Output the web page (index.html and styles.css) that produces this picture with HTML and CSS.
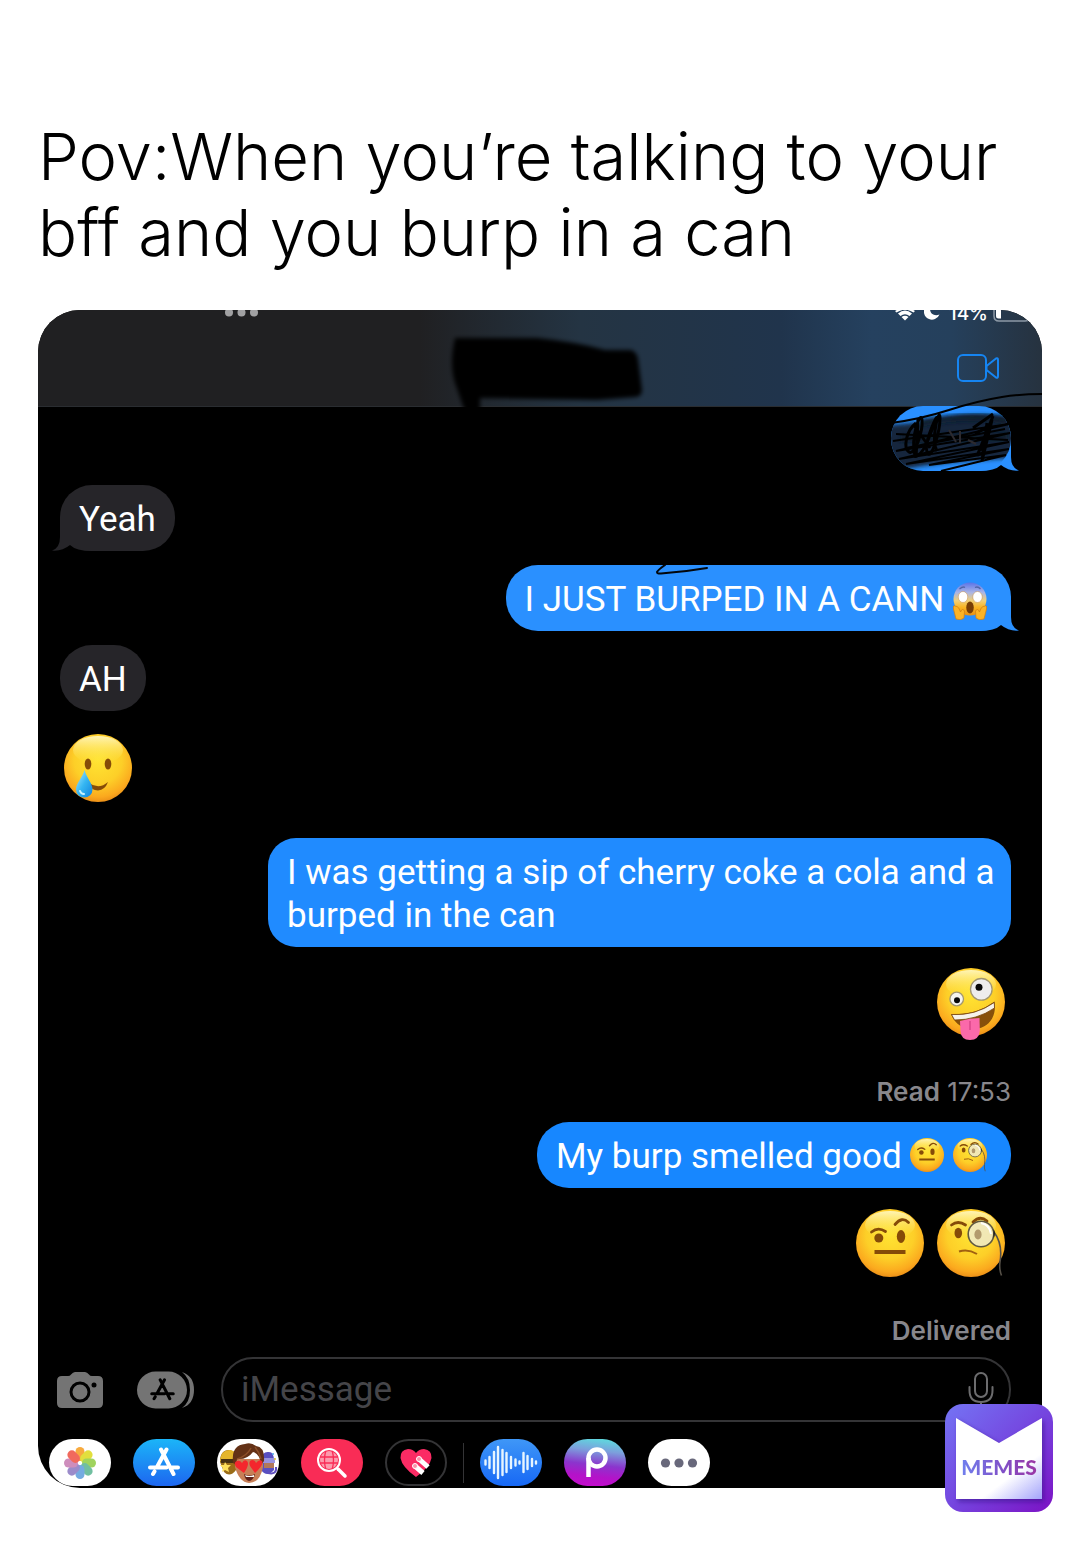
FILE: index.html
```html
<!DOCTYPE html>
<html lang="en">
<head>
<meta charset="utf-8">
<meta name="viewport" content="width=device-width, initial-scale=1">
<title>Burp in a can</title>
<link rel="stylesheet" href="styles.css">
</head>
<body>
<svg class="defs" aria-hidden="true" width="0" height="0">
  <defs>
    <radialGradient id="face" cx="0.5" cy="0.38" r="0.64">
      <stop offset="0" stop-color="#ffe433"/><stop offset="0.55" stop-color="#fdcf28"/><stop offset="0.85" stop-color="#fba91e"/><stop offset="1" stop-color="#e98a16"/>
    </radialGradient>
    <linearGradient id="shine" x1="0" y1="0" x2="0" y2="1">
      <stop offset="0" stop-color="#fffbd0" stop-opacity="0.85"/><stop offset="1" stop-color="#ffe640" stop-opacity="0"/>
    </linearGradient>
    <linearGradient id="fear" x1="0" y1="0" x2="0" y2="1">
      <stop offset="0" stop-color="#5a74e8"/><stop offset="0.3" stop-color="#a9b4e6"/><stop offset="0.55" stop-color="#f0cf78"/><stop offset="0.75" stop-color="#f9b524"/><stop offset="1" stop-color="#e88f12"/>
    </linearGradient>
    <linearGradient id="drop" x1="0" y1="0" x2="1" y2="1">
      <stop offset="0" stop-color="#b5ecff"/><stop offset="0.5" stop-color="#35b6f2"/><stop offset="1" stop-color="#1181dc"/>
    </linearGradient>
    <linearGradient id="store" x1="0" y1="0" x2="0" y2="1">
      <stop offset="0" stop-color="#1bb5f8"/><stop offset="1" stop-color="#1d66f0"/>
    </linearGradient>
    <linearGradient id="audio" x1="0" y1="0" x2="0" y2="1">
      <stop offset="0" stop-color="#3f97f7"/><stop offset="1" stop-color="#1768f5"/>
    </linearGradient>
    <linearGradient id="picsart" x1="0.6" y1="0" x2="0.45" y2="1">
      <stop offset="0" stop-color="#5fd8de"/><stop offset="0.25" stop-color="#7c9fdc"/><stop offset="0.55" stop-color="#8b35cd"/><stop offset="0.8" stop-color="#b413c9"/><stop offset="1" stop-color="#c20dcc"/>
    </linearGradient>
    <linearGradient id="badge" x1="0" y1="0" x2="1" y2="1">
      <stop offset="0" stop-color="#7474f4"/><stop offset="0.5" stop-color="#7546df"/><stop offset="1" stop-color="#7c12c4"/>
    </linearGradient>
    <linearGradient id="paper" x1="0.2" y1="0" x2="1" y2="1">
      <stop offset="0.65" stop-color="#fff"/><stop offset="1" stop-color="#a3a3fb"/>
    </linearGradient>
    <filter id="soft" x="-10%" y="-20%" width="120%" height="140%"><feGaussianBlur stdDeviation="2"/></filter>
    <clipPath id="pill"><rect width="120" height="65" rx="32"/></clipPath>
    <symbol id="base" viewBox="0 0 68 68">
      <circle cx="34" cy="34" r="34" fill="url(#face)"/><ellipse cx="34" cy="16" rx="25" ry="14" fill="url(#shine)"/>
    </symbol>
    <symbol id="tear" viewBox="0 0 68 72">
      <use href="#base" width="68" height="68"/>
      <ellipse cx="24" cy="30" rx="3.3" ry="5.5" fill="#854b08"/><ellipse cx="44" cy="30" rx="3.3" ry="5.5" fill="#854b08"/>
      <path d="M25 49Q35 56 44 48Q41 56 34 56.500Q27 56.500 25 49Z" fill="#854b08"/>
      <path d="M20.500 36C22 43 28.500 49 28.500 55.500A8.200 8 0 0 1 12 55.500C12 49 19 43 20.500 36Z" fill="url(#drop)"/>
      <path d="M16 57q1 3 4 3" fill="none" stroke="#c9f3ff" stroke-width="2" stroke-linecap="round"/>
    </symbol>
    <symbol id="zany" viewBox="0 0 68 72">
      <use href="#base" width="68" height="68"/>
      <circle cx="19.700" cy="31" r="6.800" fill="#f5f4ef" stroke="#a39770" stroke-width="1.300"/><circle cx="20" cy="32.300" r="3" fill="#080808"/>
      <circle cx="44.300" cy="21.300" r="10.800" fill="#eeedec" stroke="#a39770" stroke-width="1.300"/><circle cx="42" cy="19.300" r="3.500" fill="#080808"/>
      <path d="M14 46Q38 48 57.500 33.500C60 48 52 60 38 61C26 62 18 56 14 46Z" fill="#87500a"/>
      <path d="M14.500 46.500Q38 48 57.300 34.500L57.500 40Q40 52 17.500 52Z" fill="#f6f2ea" stroke="#77430a" stroke-width="0.800"/>
      <path d="M23 53Q33 50 42.500 50L42.800 63Q42 72 33 72Q24 72 23.500 63Z" fill="#fb69aa"/>
      <path d="M33 53v9" stroke="#d23f80" stroke-width="1.200"/>
    </symbol>
    <symbol id="raised" viewBox="0 0 68 72">
      <use href="#base" width="68" height="68"/>
      <circle cx="22.800" cy="29" r="4.500" fill="#854b08"/><ellipse cx="45" cy="27.500" rx="4.200" ry="6.500" fill="#854b08"/>
      <path d="M15.500 23Q22 17.500 29.500 22.500M39 15.500Q46 7 52.500 13.500" fill="none" stroke="#854b08" stroke-width="2.800" stroke-linecap="round"/>
      <path d="M18.500 43h31" stroke="#854b08" stroke-width="4"/>
    </symbol>
    <symbol id="monocle" viewBox="0 0 68 72">
      <use href="#base" width="68" height="68"/>
      <ellipse cx="21.300" cy="24" rx="3.800" ry="5.200" fill="#854b08"/>
      <path d="M14.500 16Q21 11 28.500 16M36 13Q43 6 50 12" fill="none" stroke="#854b08" stroke-width="2.800" stroke-linecap="round"/>
      <circle cx="44" cy="25" r="12.800" fill="#eeeacb" fill-opacity="0.850" stroke="#5f5942" stroke-width="1.600"/>
      <ellipse cx="41" cy="25.500" rx="3.600" ry="5" fill="#b29a6d"/>
      <path d="M44 14q9 2 10 11" stroke="#fff" stroke-width="2" fill="none"/>
      <path d="M22 42.500Q31 39.500 40 45" fill="none" stroke="#a06011" stroke-width="2"/>
      <path d="M57 23C63 31 65 41 63 53Q62 60 64.500 66.500" fill="none" stroke="#555047" stroke-width="1.600"/><path d="M56.500 20q3 4 0 9z" fill="#1b1b1b"/>
    </symbol>
    <symbol id="scream" viewBox="0 0 68 76">
      <circle cx="34" cy="34" r="33" fill="url(#fear)"/>
      <path d="M13 14q7-6 11-3M44 11q6-3 11 3" fill="none" stroke="#5366a8" stroke-width="2.500"/>
      <ellipse cx="20" cy="30" rx="9.500" ry="11" fill="#fff" stroke="#c98d42"/><ellipse cx="49" cy="30" rx="9.500" ry="11" fill="#fff" stroke="#c98d42"/>
      <ellipse cx="34" cy="51" rx="7.500" ry="12" fill="#783e06"/>
      <path d="M4 48Q0 45 1 54L6 74Q16 78 22 72L23 58Q19 51 15 60Q12 50 8 49Z" fill="#fbb326" stroke="#d17f12" stroke-width="1.500"/>
      <path d="M64 48Q68 45 67 54L62 74Q52 78 46 72L45 58Q49 51 53 60Q56 50 60 49Z" fill="#fbb326" stroke="#d17f12" stroke-width="1.500"/>
    </symbol>
    <symbol id="tail" viewBox="0 0 40 34">
      <path d="M0 0H32V20Q32 31 40 33.500Q30 34.500 22 28Q16 34 0 34V0Z" fill="currentColor"/>
    </symbol>
    <symbol id="storemark" viewBox="0 0 32 30">
      <g fill="none" stroke="currentColor" stroke-width="4" stroke-linecap="round"><path d="M13 2.500L25.500 27M18.500 2.500L9 20M6.500 24.500L5 27M2 20.500H18.500M24 20.500H30"/></g>
    </symbol>
  </defs>
</svg>

<main class="post">
  <h1 class="caption">Pov:When you’re talking to your bff and you burp in a can</h1>

  <section class="phone" aria-label="Conversation">
    <header class="header">
      <div class="status">
        <svg class="status-dots" width="34" height="12" viewBox="0 0 34 12" fill="#a1a1a3" aria-hidden="true"><circle cx="4" cy="2.500" r="4"/><circle cx="16.500" cy="2.500" r="4"/><circle cx="29" cy="2.500" r="4"/></svg>
        <svg width="20" height="12" viewBox="0 0 20 12" aria-label="Wi-Fi" role="img"><path d="M0 1Q10-5 20 1L18.500 2.500Q10-3 1.500 2.500Z" fill="#fff"/><path d="M3 3.500Q10-2.500 17 3.500L14.500 6Q10 2.500 5.500 6Z" fill="#fff"/><path d="M6.500 7Q10 4.500 13.500 7L10 10.500Z" fill="#fff"/></svg>
        <svg width="16" height="12" viewBox="0 0 16 12" aria-label="Focus" role="img"><path d="M2-4C-4 4 4 12 11 9Q14 8 15.500 4.500C9 7 4 2 7-4Z" fill="#fff"/></svg>
        <span class="battery-text">14%</span>
        <svg class="battery" width="38" height="12" viewBox="0 0 38 12" aria-label="Battery" role="img"><path d="M1-4V6Q1 11 6 11H32Q37 11 37 6V-4" fill="none" stroke="#8d99a6" stroke-width="1.500"/><path d="M3-4V6Q3 8.500 5.500 8.500H8V-4Z" fill="#fff"/></svg>
      </div>
      <div class="titlebar">
        <svg class="redacted" width="200" height="80" viewBox="0 0 200 80" aria-hidden="true"><path d="M8 10H90Q130 14 158 22H184Q190 24 191 31L195 62Q195 68 189 69L150 72L33 70V84H18Q12 66 8 55Q2 36 8 10Z" fill="#000002" filter="url(#soft)"/></svg>
        <button class="icon-button video" type="button" aria-label="Video call">
          <svg width="44" height="30" viewBox="0 0 44 30" fill="none" stroke="#1685f2" stroke-width="2" stroke-linejoin="round"><rect x="2" y="2" width="28" height="26" rx="5"/><path d="M30.500 13L40 5.500Q42 4.500 42 7V23Q42 25.500 40 24.500L30.500 17Z"/></svg>
        </button>
      </div>
    </header>

    <div class="thread">
      <div class="bubble sent light hidden-text">
        <svg class="tail" width="40" height="34" aria-hidden="true"><use href="#tail"/></svg>
        <svg class="scribble" width="152" height="78" viewBox="0 -13 152 78" fill="none" stroke="#000" aria-hidden="true">
          <g clip-path="url(#pill)">
            <path d="M-10 20L50 14Q90 4 128 13L125 52Q60 55 20 62Q-10 66 -10 32Z" fill="#12263e" stroke="none" filter="url(#soft)"/>
            <path d="M30 17q50-10 86-2M10 33l106-3" stroke="#0c1a2b" stroke-width="7" filter="url(#soft)"/>
          </g>
          <path d="M0 17Q30 13 58 4T111-9Q130-12 152-12" stroke-width="2"/>
          <path d="M2 35L118 18L5 45L119 27L8 53L118 36L15 58L118 43L38 59L115 49L50 65M5 28L117 34M15 42L114 23" stroke-width="2"/>
          <path d="M25 17C15 25 12 42 18 46S32 25 31 14S19 31 24 50C34 50 41 22 45 13S32 35 36 46S49 25 49 12S39 33 46 45M22 18L39 42M27 13L25 52M96 17L91 55L101 14L86 50L102 10L89 45M82 22L102 8M84 28L101 18" stroke-width="3"/>
          <path d="M58 24l7 12M69 25v12M77 34l8 4" stroke="#2c2a2f" stroke-width="2"/>
        </svg>
      </div>
      <p class="bubble received">Yeah<svg class="tail" width="40" height="34" aria-hidden="true"><use href="#tail"/></svg></p>
      <p class="bubble sent light">I JUST BURPED IN A CANN <svg class="emoji emoji-tall" width="34" height="38" role="img" aria-label="screaming face"><use href="#scream"/></svg><svg class="stray" width="56" height="12" viewBox="0 0 56 12" fill="none" stroke="#03070c" stroke-width="2" stroke-linecap="round" aria-hidden="true"><path d="M11 0Q4 5 3 7Q3 9 7 8.500Q30 7 53 3"/></svg><svg class="tail" width="40" height="34" aria-hidden="true"><use href="#tail"/></svg></p>
      <p class="bubble received">AH</p>
      <p class="big received-big"><svg width="68" height="72" role="img" aria-label="smiling face with tear"><use href="#tear"/></svg></p>
      <p class="bubble sent middle">I was getting a sip of cherry coke a cola and a burped in the can</p>
      <p class="big sent-big"><svg width="68" height="72" role="img" aria-label="zany face"><use href="#zany"/></svg></p>
      <p class="receipt read"><strong>Read</strong> 17:53</p>
      <p class="bubble sent">My burp smelled good <svg class="emoji" width="34" height="36" role="img" aria-label="raised eyebrow"><use href="#raised"/></svg> <svg class="emoji" width="34" height="36" role="img" aria-label="monocle"><use href="#monocle"/></svg></p>
      <p class="big sent-big"><svg width="68" height="72" role="img" aria-label="raised eyebrow"><use href="#raised"/></svg><svg width="68" height="72" role="img" aria-label="monocle"><use href="#monocle"/></svg></p>
      <p class="receipt"><strong>Delivered</strong></p>
    </div>

    <form class="composer">
      <button class="icon-button" type="button" aria-label="Camera">
        <svg width="48" height="38" viewBox="0 0 48 38"><path d="M6 5H12Q14 5 15 3.500Q17 1 19 1H29Q31 1 33 3.500Q34 5 36 5H42Q47 5 47 10V32Q47 37 42 37H6Q1 37 1 32V10Q1 5 6 5Z" fill="#747474"/><circle cx="24" cy="21" r="9" fill="none" stroke="#000" stroke-width="3"/><circle cx="38" cy="14" r="2.500" fill="#000"/></svg>
      </button>
      <button class="icon-button apps-toggle" type="button" aria-label="Apps">
        <svg width="58" height="38" viewBox="0 0 58 38"><rect y="0.500" width="50" height="37" rx="18.500" fill="#747474"/><path d="M45 1Q57 5 57 19T45 37Q53 31 53 19T45 1Z" fill="#747474"/><use href="#storemark" x="13" y="7" width="25" height="23" color="#000"/></svg>
      </button>
      <label class="field">
        <input type="text" placeholder="iMessage" aria-label="iMessage">
        <svg width="26" height="38" viewBox="0 0 26 38" fill="none" stroke="#6c6c6e" stroke-width="2" stroke-linecap="round" aria-hidden="true"><rect x="7" y="2" width="12" height="24" rx="6"/><path d="M1.500 16v3.500Q1.500 31 13 31T24.500 19.500V16M13 31v6"/></svg>
      </label>
    </form>

    <nav class="apps" aria-label="Message apps">
      <button class="app white" type="button" aria-label="Photos">
        <svg width="34" height="34" viewBox="-17 -17 34 34"><g class="petals"><rect x="-4.500" y="-16" width="9" height="14" rx="4.500" fill="#f7a12b"/><rect x="-4.500" y="-16" width="9" height="14" rx="4.500" fill="#dfdc29" transform="rotate(45)"/><rect x="-4.500" y="-16" width="9" height="14" rx="4.500" fill="#96cf4d" transform="rotate(90)"/><rect x="-4.500" y="-16" width="9" height="14" rx="4.500" fill="#62b996" transform="rotate(135)"/><rect x="-4.500" y="-16" width="9" height="14" rx="4.500" fill="#66a2de" transform="rotate(180)"/><rect x="-4.500" y="-16" width="9" height="14" rx="4.500" fill="#917fc5" transform="rotate(225)"/><rect x="-4.500" y="-16" width="9" height="14" rx="4.500" fill="#c981b5" transform="rotate(270)"/><rect x="-4.500" y="-16" width="9" height="14" rx="4.500" fill="#f0594c" transform="rotate(315)"/></g></svg>
      </button>
      <button class="app" type="button" aria-label="App Store">
        <svg width="62" height="47" viewBox="0 0 62 47"><rect width="62" height="47" rx="23.500" fill="url(#store)"/><use href="#storemark" x="15" y="8" width="32" height="30" color="#fff"/></svg>
      </button>
      <button class="app white" type="button" aria-label="Memoji">
        <svg width="62" height="47" viewBox="0 0 62 47"><path d="M3 23Q3 11 12 11Q21 12 20 23L19 31Q13 39 7 33Z" fill="#9a6c18"/><path d="M3 22Q4 10 14 11Q20 13 20 20Z" fill="#e4b52b"/><path d="M4 20h16v4H4z" fill="#473112"/><path d="M8 23l2 3h4l-3 3 1 4-4-2-3 2 1-4-3-3h4z" fill="#ffe05b"/><path d="M45 20Q45 12 52 13Q57 13 57 22V31Q50 39 44 31Z" fill="#594fc0"/><path d="M44 19h14v5H44z" fill="#9993df"/><path d="M47 24h10v5H47z" fill="#b27858"/><path d="M51 34q9 2 8-6" stroke="#6050bd" stroke-width="2" fill="none"/><circle cx="56" cy="15" r="1" fill="#4aa8e8"/><circle cx="58" cy="20" r="1" fill="#e2c434"/><path d="M18 20H46V28Q43 44 32 44Q22 43 18 28Z" fill="#c77f57"/><path d="M16 24Q14 6 28 5Q34 3 39 7Q48 8 47 22L44 26Q43 15 36 13Q30 21 20 20L19 26Z" fill="#633116"/><path d="M20 20Q30 17 34 9M38 8Q42 13 44 20" stroke="#8b4e28" stroke-width="1.500" fill="none"/><path d="M27 34L19 28Q16 23 20 22Q23 21 25 24Q27 20 30 22Q33 25 27 34ZM38 34L33 27Q31 22 35 21Q38 21 39 24Q42 20 45 22Q47 26 38 34Z" fill="#f4262d"/><path d="M27 35Q32 38 38 35Q36 42 32 42Q28 41 27 35Z" fill="#5c2019"/><path d="M28 36Q32 38 37 36V38H29Z" fill="#fff"/></svg>
      </button>
      <button class="app" type="button" aria-label="Image search">
        <svg width="62" height="47" viewBox="0 0 62 47"><rect width="62" height="47" rx="23.500" fill="#f92c56"/><circle cx="28" cy="21" r="9" fill="#fc9bad"/><g fill="none" stroke="#f92c56" stroke-width="1.300"><path d="M18 18h20M18 24h20M25 11q-3 10 0 20M31 11q3 10 0 20"/></g><circle cx="28" cy="21" r="11" fill="none" stroke="#fff" stroke-width="2"/><path d="M37 30L44 37" stroke="#fff" stroke-width="3.500" stroke-linecap="round"/></svg>
      </button>
      <button class="app outlined" type="button" aria-label="Digital Touch">
        <svg width="32" height="28" viewBox="0 0 32 28"><path d="M16 4Q19 0 24 0Q32 1 31.500 9Q30 18 16 28Q2 18 .5 9Q0 1 8 0Q13 0 16 4Z" fill="#fb2b64"/><path d="M15 17L23 24M19 10L28 18" stroke="#fff" stroke-width="5"/><circle cx="15" cy="17" r="2.500" fill="#f793aa" stroke="#fff" stroke-width="1"/><circle cx="19" cy="10" r="2.500" fill="#f793aa" stroke="#fff" stroke-width="1"/></svg>
      </button>
      <span class="divider"></span>
      <button class="app" type="button" aria-label="Audio">
        <svg width="62" height="47" viewBox="0 0 62 47"><rect width="62" height="47" rx="23.500" fill="url(#audio)"/><path d="M5.500 21.500v4M9.500 18v11M14 13v21M18 8v31M22.500 11v25M26.500 14v19M31 18v11M35.500 20.500v6M39.500 22.500v2M43.500 14v19M47.500 17v13M52 20v7M56 22.500v2" stroke="#e7f5ff" stroke-width="2.400" stroke-linecap="round"/></svg>
      </button>
      <button class="app" type="button" aria-label="Picsart">
        <svg width="62" height="47" viewBox="0 0 62 47"><rect width="62" height="47" rx="23.500" fill="url(#picsart)"/><circle cx="33" cy="19" r="8.500" fill="none" stroke="#fff" stroke-width="4.500"/><path d="M24.500 19V38" stroke="#fff" stroke-width="4.500"/></svg>
      </button>
      <button class="app white" type="button" aria-label="More">
        <svg width="38" height="10" viewBox="0 0 38 10" fill="#68687b"><circle cx="5.500" cy="5" r="4.600"/><circle cx="19" cy="5" r="4.600"/><circle cx="32.500" cy="5" r="4.600"/></svg>
      </button>
    </nav>
  </section>

  <div class="memes">
    <svg class="memes-art" width="108" height="108" viewBox="0 0 108 108" aria-hidden="true"><rect width="108" height="108" rx="18" fill="url(#badge)"/><path d="M13 16L56 41L99 16V98H13Z" fill="#310a83" opacity="0.500" filter="url(#soft)"/><path d="M11 14L54 39L97 14V95H11Z" fill="url(#paper)"/></svg>
    <span class="memes-text">MEMES</span>
  </div>
</main>
</body>
</html>
```
FILE: styles.css
```css
* {
  box-sizing: border-box;
}

body {
  margin: 0;
  background: #fff;
  font-family: Inter, "Liberation Sans", sans-serif;
}

svg {
  display: block;
  flex: none;
}

p {
  margin: 0;
}

.defs {
  position: absolute;
}

button {
  border: 0;
  padding: 0;
  background: none;
}

.post {
  position: relative;
  padding: 119px 38px 63px;
}

.caption {
  margin: 0 0 39px;
  font-size: 65px;
  font-weight: 300;
  line-height: 76px;
  color: #000;
}

.phone {
  overflow: hidden;
  border-radius: 42px;
  background: #000;
}

.header {
  height: 97px;
  background: linear-gradient(90deg, #202022 0%, #202022 38%, #243443 54%, #20344c 74%, #25415f 83%, #25405c 91%, #26323f 100%);
  border-bottom: 1px solid #2a2d31;
}

.status {
  display: flex;
  align-items: flex-end;
  gap: 9px;
  height: 12px;
  padding-right: 11px;
  overflow: hidden;
}

.status-dots {
  margin-left: 187px;
  margin-right: auto;
}

.battery-text {
  font-size: 19px;
  line-height: 16px;
  font-weight: 500;
  color: #fff;
}

.battery {
  margin-left: -4px;
}

.titlebar {
  display: grid;
  grid-template-columns: 1fr auto 1fr;
  height: 84px;
  padding-left: 14px;
}

.redacted {
  grid-column: 2;
  margin-top: 6px;
}

.video {
  justify-self: end;
  align-self: start;
  margin: 31px 42px 0 0;
}

.thread {
  display: flex;
  flex-direction: column;
  gap: 14px;
  margin-top: -1px;
  padding: 0 31px 0 22px;
}

.bubble {
  position: relative;
  isolation: isolate;
  align-self: flex-end;
  max-width: 743px;
  padding: 13px 24px 10px 19px;
  border-radius: 32px;
  background: #1787ff;
  color: #fff;
  font-family: Roboto, "Liberation Sans", sans-serif;
  font-size: 35px;
  line-height: 43px;
}

.light {
  background: #2a90ff;
}

.light .tail {
  color: #2a90ff;
}

.middle {
  margin-top: 18px;
  padding-right: 16px;
  border-radius: 28px;
  background: #208bff;
}

.received {
  align-self: flex-start;
  padding-right: 19px;
  background: #262529;
}

.tail {
  position: absolute;
  right: -8px;
  bottom: 0;
  z-index: -1;
}

.received .tail {
  right: auto;
  left: -8px;
  color: #262529;
  transform: scaleX(-1);
}

.hidden-text {
  width: 120px;
  height: 65px;
}

.scribble {
  position: absolute;
  left: 0;
  bottom: 0;
}

.stray {
  position: absolute;
  top: 0;
  left: 148px;
}

.emoji {
  display: inline-block;
  margin: -4px 0;
  vertical-align: -2px;
}

.emoji-tall {
  vertical-align: -5px;
}

.big {
  display: flex;
  gap: 13px;
  padding: 9px 4px 0;
}

.sent-big {
  align-self: flex-end;
  padding: 7px 6px 0;
}

.receipt {
  align-self: flex-end;
  margin-top: 20px;
  font-size: 26px;
  line-height: 32px;
  color: #88878c;
}

.read {
  margin-top: 22px;
}

.receipt strong {
  font-weight: 600;
}

.composer {
  display: flex;
  align-items: center;
  gap: 26px;
  margin-top: 10px;
  padding: 0 31px 0 18px;
}

.apps-toggle {
  margin-left: 7px;
}

.field {
  display: flex;
  align-items: center;
  flex: 1;
  height: 65px;
  padding: 0 15px 0 18px;
  border: 2px solid #343436;
  border-radius: 32px;
}

.field input {
  flex: 1;
  min-width: 0;
  padding: 0;
  border: 0;
  outline: 0;
  background: none;
  color: #fff;
  font-family: Roboto, "Liberation Sans", sans-serif;
  font-size: 35px;
  line-height: 43px;
}

.field input::placeholder {
  color: #454549;
  opacity: 1;
}

.apps {
  display: flex;
  align-items: center;
  gap: 22px;
  padding: 17px 11px 2px;
}

.app {
  display: flex;
  align-items: center;
  justify-content: center;
  flex: none;
  width: 62px;
  height: 47px;
  border-radius: 24px;
}

.white {
  background: #fff;
}

.outlined {
  border: 2px solid #343436;
}

.petals {
  opacity: 0.9;
}

.divider {
  width: 1px;
  height: 40px;
  margin: 0 -6px;
  background: #343436;
}

.memes {
  position: absolute;
  right: 27px;
  bottom: 39px;
  width: 108px;
  height: 108px;
  display: flex;
  align-items: center;
  justify-content: center;
}

.memes-art {
  position: absolute;
  top: 0;
  left: 0;
}

.memes-text {
  position: relative;
  margin-top: 17px;
  background: linear-gradient(90deg, #7080ee, #8050c8 55%, #9a35a4);
  background-clip: text;
  color: transparent;
  font-family: Lato, sans-serif;
  font-size: 21px;
  font-weight: 900;
  line-height: 24px;
}
```
